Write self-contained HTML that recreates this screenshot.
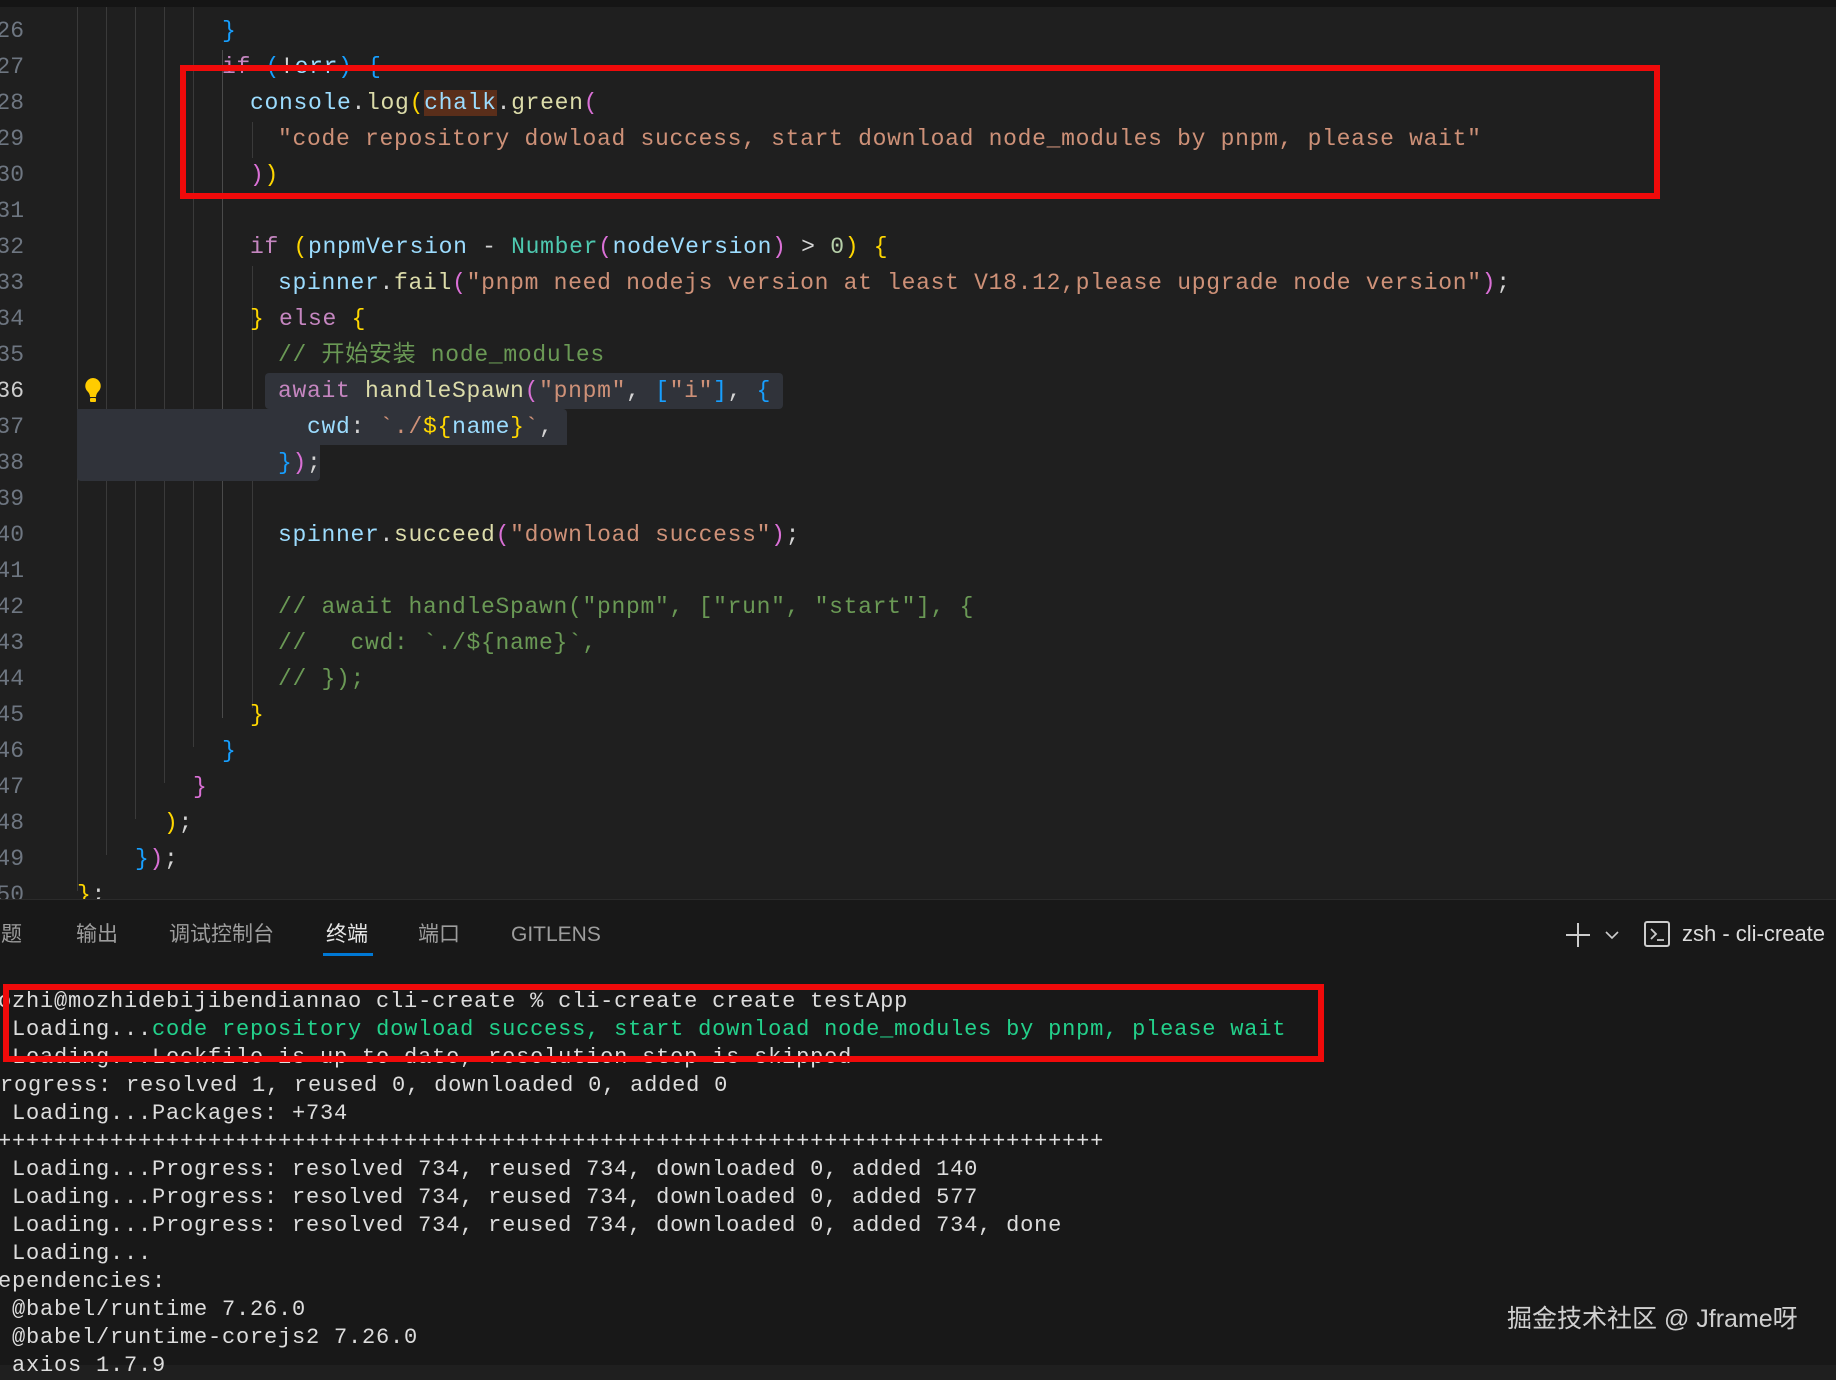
<!DOCTYPE html>
<html><head><meta charset="utf-8"><style>
html,body{margin:0;padding:0;}
body{width:1836px;height:1364px;overflow:hidden;background:#1f1f1f;position:relative;font-family:"Liberation Mono","Noto Sans CJK SC",monospace;}
.topbar{position:absolute;left:0;top:0;width:1836px;height:7px;background:#151515;}
.ln{position:absolute;left:-20px;width:44px;text-align:right;color:#6e7681;font-size:23px;line-height:36px;}
.cl{position:absolute;white-space:pre;font-size:23px;line-height:36px;letter-spacing:0.7px;color:#d4d4d4;}
.g{position:absolute;width:1px;background:#3a3a3a;}
.k{color:#c586c0}.v{color:#9cdcfe}.f{color:#dcdcaa}.s{color:#ce9178}.c{color:#6a9955}.t{color:#4ec9b0}.n{color:#b5cea8}
.y{color:#ffd700}.p{color:#da70d6}.b{color:#179fff}
.hl{position:absolute;background:#30333a;border-radius:4px;}
.red{position:absolute;border:6px solid #f00a0a;box-sizing:border-box;}
.term{position:absolute;left:0;top:899px;width:1836px;height:465px;background:#181818;border-top:1px solid #2b2b2b;}
.tab{position:absolute;top:922px;font-family:"Liberation Sans","Noto Sans CJK SC",sans-serif;font-size:21px;line-height:26px;color:#9d9d9d;}
.tl{position:absolute;white-space:pre;font-size:22px;line-height:28px;letter-spacing:0.8px;color:#dddddd;}
.gr{color:#23d18b}
</style></head><body>
<div class="topbar"></div>
<div class="g" style="left:77px;top:7px;height:884px"></div>
<div class="g" style="left:106px;top:7px;height:848px"></div>
<div class="g" style="left:135px;top:7px;height:812px"></div>
<div class="g" style="left:164px;top:7px;height:776px"></div>
<div class="g" style="left:193px;top:7px;height:740px"></div>
<div class="g" style="left:222px;top:50px;height:668px;background:#4a4a4a"></div>
<div class="g" style="left:252px;top:122px;height:36px"></div>
<div class="g" style="left:252px;top:266px;height:442px"></div>
<div class="g" style="left:281px;top:410px;height:36px"></div>
<div class="hl" style="left:265px;top:373px;width:518px;height:36px"></div>
<div class="hl" style="left:77px;top:409px;width:490px;height:36px;border-radius:0 4px 0 0"></div>
<div class="hl" style="left:77px;top:445px;width:243px;height:36px;border-radius:0 0 4px 4px"></div>
<svg style="position:absolute;left:82px;top:376px" width="22" height="30" viewBox="0 0 22 30"><path d="M11 2a8 8 0 0 0-5 14c1 1 2 3 2 5h6c0-2 1-4 2-5a8 8 0 0 0-5-14z" fill="#ffcc00"/><rect x="8" y="22" width="6" height="4" rx="1" fill="#ffcc00"/></svg>

<div class="ln" style="top:13px">26</div><div class="cl" style="left:222px;top:13px"><span class="b">}</span></div>
<div class="ln" style="top:49px">27</div><div class="cl" style="left:222px;top:49px"><span class="k">if</span> <span class="b">(</span>!<span class="v">err</span><span class="b">)</span> <span class="b">{</span></div>
<div class="ln" style="top:85px">28</div><div class="cl" style="left:250px;top:85px"><span class="v">console</span>.<span class="f">log</span><span class="y">(</span><span class="v" style="background:#5a2e1a">chalk</span>.<span class="f">green</span><span class="p">(</span></div>
<div class="ln" style="top:121px">29</div><div class="cl" style="left:278px;top:121px"><span class="s">"code repository dowload success, start download node_modules by pnpm, please wait"</span></div>
<div class="ln" style="top:157px">30</div><div class="cl" style="left:250px;top:157px"><span class="p">)</span><span class="y">)</span></div>
<div class="ln" style="top:193px">31</div>
<div class="ln" style="top:229px">32</div><div class="cl" style="left:250px;top:229px"><span class="k">if</span> <span class="y">(</span><span class="v">pnpmVersion</span> - <span class="t">Number</span><span class="p">(</span><span class="v">nodeVersion</span><span class="p">)</span> &gt; <span class="n">0</span><span class="y">)</span> <span class="y">{</span></div>
<div class="ln" style="top:265px">33</div><div class="cl" style="left:278px;top:265px"><span class="v">spinner</span>.<span class="f">fail</span><span class="p">(</span><span class="s">"pnpm need nodejs version at least V18.12,please upgrade node version"</span><span class="p">)</span>;</div>
<div class="ln" style="top:301px">34</div><div class="cl" style="left:250px;top:301px"><span class="y">}</span> <span class="k">else</span> <span class="y">{</span></div>
<div class="ln" style="top:337px">35</div><div class="cl" style="left:278px;top:337px"><span class="c">// 开始安装 node_modules</span></div>
<div class="ln" style="top:373px;color:#ccc">36</div><div class="cl" style="left:278px;top:373px"><span class="k">await</span> <span class="f">handleSpawn</span><span class="p">(</span><span class="s">"pnpm"</span>, <span class="b">[</span><span class="s">"i"</span><span class="b">]</span>, <span class="b">{</span></div>
<div class="ln" style="top:409px">37</div><div class="cl" style="left:307px;top:409px"><span class="v">cwd</span>: <span class="s">`./</span><span class="y">${</span><span class="v">name</span><span class="y">}</span><span class="s">`</span>,</div>
<div class="ln" style="top:445px">38</div><div class="cl" style="left:278px;top:445px"><span class="b">}</span><span class="p">)</span>;</div>
<div class="ln" style="top:481px">39</div>
<div class="ln" style="top:517px">40</div><div class="cl" style="left:278px;top:517px"><span class="v">spinner</span>.<span class="f">succeed</span><span class="p">(</span><span class="s">"download success"</span><span class="p">)</span>;</div>
<div class="ln" style="top:553px">41</div>
<div class="ln" style="top:589px">42</div><div class="cl" style="left:278px;top:589px"><span class="c">// await handleSpawn("pnpm", ["run", "start"], {</span></div>
<div class="ln" style="top:625px">43</div><div class="cl" style="left:278px;top:625px"><span class="c">//   cwd: `./${name}`,</span></div>
<div class="ln" style="top:661px">44</div><div class="cl" style="left:278px;top:661px"><span class="c">// });</span></div>
<div class="ln" style="top:697px">45</div><div class="cl" style="left:250px;top:697px"><span class="y">}</span></div>
<div class="ln" style="top:733px">46</div><div class="cl" style="left:222px;top:733px"><span class="b">}</span></div>
<div class="ln" style="top:769px">47</div><div class="cl" style="left:193px;top:769px"><span class="p">}</span></div>
<div class="ln" style="top:805px">48</div><div class="cl" style="left:164px;top:805px"><span class="y">)</span>;</div>
<div class="ln" style="top:841px">49</div><div class="cl" style="left:135px;top:841px"><span class="b">}</span><span class="p">)</span>;</div>
<div class="ln" style="top:877px">50</div><div class="cl" style="left:77px;top:877px"><span class="y">}</span>;</div>

<div class="red" style="left:180px;top:65px;width:1480px;height:134px"></div>

<div class="term"></div>
<div class="tab" style="left:-20px">问题</div>
<div class="tab" style="left:76px">输出</div>
<div class="tab" style="left:169px">调试控制台</div>
<div class="tab" style="left:326px;color:#e7e7e7">终端</div>
<div style="position:absolute;left:323px;top:953px;width:50px;height:3px;background:#0078d4"></div>
<div class="tab" style="left:418px">端口</div>
<div class="tab" style="left:511px">GITLENS</div>
<svg style="position:absolute;left:1564px;top:921px" width="28" height="28" viewBox="0 0 28 28"><path d="M14 2v24M2 14h24" stroke="#ccc" stroke-width="2"/></svg>
<svg style="position:absolute;left:1604px;top:930px" width="16" height="10" viewBox="0 0 16 10"><path d="M2 2l6 6 6-6" stroke="#ccc" stroke-width="1.6" fill="none"/></svg>
<div style="position:absolute;left:1644px;top:921px;width:26px;height:26px;border:2px solid #ccc;border-radius:3px;box-sizing:border-box"></div>
<svg style="position:absolute;left:1644px;top:921px" width="26" height="26" viewBox="0 0 26 26"><path d="M7 8l5 5-5 5M13 19h7" stroke="#ccc" stroke-width="1.8" fill="none"/></svg>
<div class="tab" style="left:1682px;top:921px;color:#ddd;font-size:22px">zsh - cli-create</div>

<div class="tl" style="left:-2px;top:988px">ozhi@mozhidebijibendiannao cli-create % cli-create create testApp</div>
<div class="tl" style="left:-2px;top:1016px"> Loading...<span class="gr">code repository dowload success, start download node_modules by pnpm, please wait</span></div>
<div class="tl" style="left:-2px;top:1044px"> Loading...Lockfile is up to date, resolution step is skipped</div>
<div class="tl" style="left:-14px;top:1072px">Progress: resolved 1, reused 0, downloaded 0, added 0</div>
<div class="tl" style="left:-2px;top:1100px"> Loading...Packages: +734</div>
<div class="tl" style="left:-2px;top:1128px">+++++++++++++++++++++++++++++++++++++++++++++++++++++++++++++++++++++++++++++++</div>
<div class="tl" style="left:-2px;top:1156px"> Loading...Progress: resolved 734, reused 734, downloaded 0, added 140</div>
<div class="tl" style="left:-2px;top:1184px"> Loading...Progress: resolved 734, reused 734, downloaded 0, added 577</div>
<div class="tl" style="left:-2px;top:1212px"> Loading...Progress: resolved 734, reused 734, downloaded 0, added 734, done</div>
<div class="tl" style="left:-2px;top:1240px"> Loading...</div>
<div class="tl" style="left:-16px;top:1268px">dependencies:</div>
<div class="tl" style="left:-2px;top:1296px"> @babel/runtime 7.26.0</div>
<div class="tl" style="left:-2px;top:1324px"> @babel/runtime-corejs2 7.26.0</div>
<div class="tl" style="left:-2px;top:1352px"> axios 1.7.9</div>

<div class="red" style="left:3px;top:984px;width:1321px;height:78px"></div>

<div style="position:absolute;left:1507px;top:1299px;font-family:'Liberation Sans','Noto Sans CJK SC',sans-serif;font-size:25px;color:#d0d0d0">掘金技术社区 @ Jframe呀</div>
</body></html>
